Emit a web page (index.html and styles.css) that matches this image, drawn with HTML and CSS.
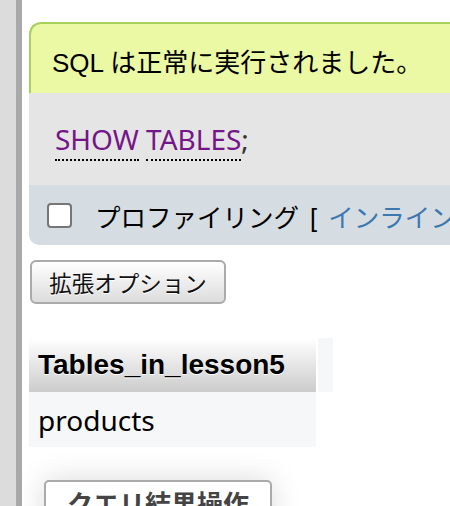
FILE: index.html
```html
<!DOCTYPE html>
<html lang="ja">
<head>
<meta charset="utf-8">
<link rel="stylesheet" href="styles.css">
</head>
<body>
<div class="page">
  <div class="sidebar"></div>
  <div class="divider"></div>
  <main class="main">
    <div class="msg-success">SQL は正常に実行されました。</div>
    <div class="sqlbox">
      <span class="kw">SHOW</span> <span class="kw">TABLES</span>;
    </div>
    <div class="tools">
      <span class="checkbox"></span>
      <span class="tools-text">プロファイリング <span class="bracket">[</span> <a class="link">インライン</a></span>
    </div>
    <button class="btn-options">拡張オプション</button>
    <table class="result">
      <tr>
        <th class="head">Tables_in_lesson5</th>
        <th class="head-empty"></th>
      </tr>
      <tr>
        <td class="cell">products</td>
      </tr>
    </table>
    <div class="ops">
      <div class="ops-btn">クエリ結果操作</div>
    </div>
  </main>
</div>
</body>
</html>
```

FILE: styles.css
```css
html, body {
  margin: 0;
  padding: 0;
  overflow: hidden;
  background: #fff;
}
body {
  width: 450px;
  height: 506px;
  font-family: "Liberation Sans", "Noto Sans CJK JP", sans-serif;
  color: #000;
}
.page {
  display: flex;
  height: 506px;
}
.sidebar {
  width: 16px;
  flex: none;
  background: #dcdcdc;
}
.divider {
  width: 6px;
  flex: none;
  background: #a9a9a9;
}
.main {
  flex: none;
  width: 520px;
  padding-left: 7px;
}
.msg-success {
  margin-top: 22px;
  background: #ebf8a4;
  border-top: 2px solid #a8d15c;
  border-left: 2px solid #a8d15c;
  border-radius: 12px 0 0 0;
  padding: 24px 0 15px 21px;
  font-size: 26px;
  line-height: 30px;
  white-space: nowrap;
}
.sqlbox {
  background: #e5e5e5;
  padding: 30px 0 30px 26px;
  font-family: "Noto Sans", "Liberation Sans", sans-serif;
  font-size: 28px;
  line-height: 32px;
  color: #333;
}
.kw {
  color: #75158a;
  border-bottom: 2px dotted #000;
  padding-bottom: 1px;
}
.tools {
  background: #d5dde3;
  height: 60px;
  border-radius: 0 0 0 10px;
  display: flex;
  align-items: center;
  padding-left: 18px;
  gap: 23px;
}
.checkbox {
  width: 21px;
  height: 21px;
  border: 2px solid #767676;
  border-radius: 4px;
  background: #fff;
  flex: none;
}
.tools-text {
  font-size: 25.5px;
  white-space: nowrap;
}
.bracket {
  margin-left: 4px;
  margin-right: 4px;
}
.link {
  color: #3c78b0;
}
.btn-options {
  display: block;
  margin: 15px 0 0 1px;
  width: 196px;
  height: 44px;
  border: 2px solid #aaa;
  border-radius: 6px;
  background: linear-gradient(#fff, #dcdcdc);
  font-family: "Noto Sans CJK JP", sans-serif;
  font-size: 22.5px;
  color: #111;
  padding: 0;
  text-shadow: 0 1px 0 #fff;
}
.result {
  margin-top: 34px;
  border-collapse: separate;
  border-spacing: 0;
}
.head {
  width: 287px;
  height: 54px;
  box-sizing: border-box;
  padding: 0 0 0 9px;
  text-align: left;
  font-size: 28px;
  font-weight: bold;
  background: linear-gradient(#fff, #cccccc);
  text-shadow: 0 1px 0 #fff;
}
.head-empty {
  width: 15px;
  padding: 0;
  background: #f6f7f9;
  border-left: 2px solid #fff;
}
.cell {
  height: 55px;
  padding: 0 0 0 9px;
  background: #f6f7f9;
  font-family: "Noto Sans", "Liberation Sans", sans-serif;
  font-size: 28px;
}
.ops {
  padding: 33px 0 0 15px;
}
.ops-btn {
  width: 228px;
  height: 50px;
  box-sizing: border-box;
  border: 2px solid #aaa;
  border-radius: 5px;
  background: #fff;
  box-shadow: 0 0 30px rgba(0,0,0,0.15);
  font-family: "Noto Sans CJK JP", sans-serif;
  font-weight: bold;
  font-size: 26px;
  color: #444;
  text-align: center;
  padding-top: 2px;
}
```
